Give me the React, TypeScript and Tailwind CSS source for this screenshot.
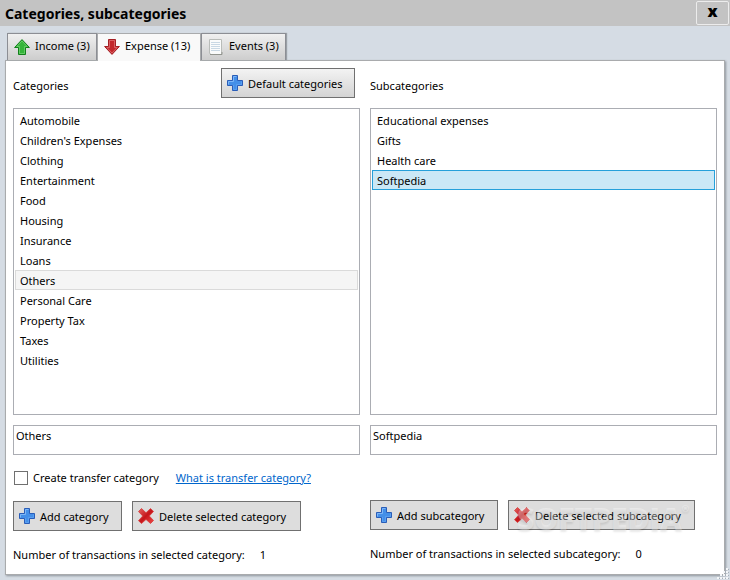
import React, { useState } from 'react';

const categories = [
  'Automobile',
  "Children's Expenses",
  'Clothing',
  'Entertainment',
  'Food',
  'Housing',
  'Insurance',
  'Loans',
  'Others',
  'Personal Care',
  'Property Tax',
  'Taxes',
  'Utilities',
];

const subcategories = ['Educational expenses', 'Gifts', 'Health care', 'Softpedia'];

export default function App() {
  const [category, setCategory] = useState('Others');
  const [subcategory, setSubcategory] = useState('Softpedia');

  return (
    <div className="flex min-h-screen flex-col bg-[#d5dce4] font-['Noto_Sans',sans-serif] text-[11px] leading-4 text-black">
      {/* Title bar */}
      <header className="flex h-[26px] items-center justify-between bg-[#c3c3c3] pl-[5px] pr-px">
        <h1 className="pt-px text-sm font-bold">Categories, subcategories</h1>
        <button
          type="button"
          aria-label="Close"
          className="flex h-6 w-[33px] items-center justify-center rounded-xs border border-[#ececec] pb-1 font-['Open_Sans',sans-serif] text-base leading-4 font-extrabold"
        >
          x
        </button>
      </header>

      <main className="relative flex flex-1 flex-col px-[5px] pt-[7px] pb-[5px]">
        {/* Tabs */}
        <div role="tablist" className="flex items-stretch pl-[2px]">
          <Tab width="w-[90px]" icon={<UpIcon />} label="Income (3)" />
          <Tab width="w-[104px]" icon={<DownIcon />} label="Expense (13)" active />
          <Tab width="w-[85px]" icon={<PageIcon />} label="Events (3)" />
        </div>

        <div
          role="tabpanel"
          className="grid flex-1 grid-cols-2 gap-[10px] border border-[#a9abad] bg-white px-[7px] pt-[7px] shadow-[1px_1px_2px_#8f969d]"
        >
          {/* Categories */}
          <section className="flex flex-col">
            <div className="mb-[10px] flex items-center justify-between pr-[5px]">
              <h2 id="categories" className="pt-[5px]">
                Categories
              </h2>
              <ActionButton icon={<PlusIcon />} label="Default categories" width="w-[134px]" light />
            </div>
            <ul role="listbox" aria-labelledby="categories" className="min-h-[307px] flex-1 border border-[#abadb3] px-px pt-px">
              {categories.map((name) => (
                <Option
                  key={name}
                  name={name}
                  selected={name === category}
                  selectedStyle="border-[#dadada] bg-[#f5f5f5]"
                  onSelect={() => setCategory(name)}
                />
              ))}
            </ul>
            <NameInput label="Category name" value={category} onChange={setCategory} />
            <div className="flex h-[46px] items-center pl-px">
              <input
                id="transfer"
                type="checkbox"
                className="size-[14px] appearance-none border border-[#707070] bg-white checked:bg-[#707070]"
              />
              <label htmlFor="transfer" className="pl-[5px]">
                Create transfer category
              </label>
              <a href="#transfer-help" className="ml-[17px] text-[#0066cc] underline">
                What is transfer category?
              </a>
            </div>
            <div className="flex gap-[10px]">
              <ActionButton icon={<PlusIcon />} label="Add category" width="w-[109px]" />
              <ActionButton icon={<CrossIcon />} label="Delete selected category" width="w-[169px]" />
            </div>
            <p className="flex h-[43px] items-center gap-[15px] pt-[4px]">
              Number of transactions in selected category: <span>1</span>
            </p>
          </section>

          {/* Subcategories */}
          <section className="flex flex-col">
            <h2 id="subcategories" className="mb-[10px] flex h-[30px] items-center pt-[5px]">
              Subcategories
            </h2>
            <ul role="listbox" aria-labelledby="subcategories" className="min-h-[307px] flex-1 border border-[#abadb3] px-px pt-px">
              {subcategories.map((name) => (
                <Option
                  key={name}
                  name={name}
                  selected={name === subcategory}
                  selectedStyle="border-[#26a0da] bg-[#cbe8f6]"
                  onSelect={() => setSubcategory(name)}
                />
              ))}
            </ul>
            <NameInput label="Subcategory name" value={subcategory} onChange={setSubcategory} />
            <div className="relative flex gap-[10px] pt-[45px] pb-px">
              <ActionButton icon={<PlusIcon />} label="Add subcategory" width="w-[128px]" />
              <ActionButton icon={<CrossIcon />} label="Delete selected subcategory" width="w-[187px]" />
              <Watermark />
            </div>
            <p className="flex h-[43px] items-center gap-[15px] pt-[2px]">
              Number of transactions in selected subcategory: <span>0</span>
            </p>
          </section>
        </div>
        <ResizeGrip />
      </main>
    </div>
  );
}

function Tab({ icon, label, width, active }: { icon: React.ReactNode; label: string; width: string; active?: boolean }) {
  const look = active
    ? 'z-10 -mb-px h-[28px] border-[#a9abad] bg-[#f9f9f9]'
    : 'h-[27px] border-[#8c8e94] bg-linear-to-b from-[#f0f0f0] to-[#cdcdcd] shadow-[1px_0_1px_#9aa0a6]';
  return (
    <button
      type="button"
      role="tab"
      aria-selected={!!active}
      className={`relative flex items-start gap-[5px] border border-b-0 pt-[5px] pl-[6px] whitespace-nowrap ${width} ${look}`}
    >
      {icon}
      <span className="-mt-px leading-4">{label}</span>
    </button>
  );
}

function ActionButton({ icon, label, width, light }: { icon: React.ReactNode; label: string; width: string; light?: boolean }) {
  return (
    <button
      type="button"
      className={`flex h-[30px] items-center gap-[5px] border border-[#707070] pl-[5px] whitespace-nowrap ${width} ${
        light ? 'bg-linear-to-b from-[#f3f3f3] to-[#d4d4d4]' : 'bg-[#dddddd]'
      }`}
    >
      {icon}
      <span className="pt-px">{label}</span>
    </button>
  );
}

type OptionProps = {
  name: string;
  selected: boolean;
  selectedStyle: string;
  onSelect: () => void;
};

function Option({ name, selected, selectedStyle, onSelect }: OptionProps) {
  return (
    <li
      role="option"
      aria-selected={selected}
      onClick={onSelect}
      className={`flex h-5 items-center border pt-px pl-1 ${selected ? selectedStyle : 'border-transparent'}`}
    >
      {name}
    </li>
  );
}

function NameInput({ label, value, onChange }: { label: string; value: string; onChange: (v: string) => void }) {
  return (
    <input
      aria-label={label}
      value={value}
      onChange={(e) => onChange(e.target.value)}
      className="mt-[10px] h-[30px] w-full border border-[#abadb3] bg-white px-[2px] pb-[10px]"
    />
  );
}

function Watermark() {
  return (
    <span
      aria-hidden="true"
      className="pointer-events-none absolute bottom-[-4px] left-[147px] flex items-start font-['Open_Sans',sans-serif] text-[30px] leading-8 font-extrabold text-white/35 [text-shadow:0_2px_2px_rgb(0_0_0/0.09)]"
    >
      SOFTPEDIA<span className="text-[9px] leading-3">®</span>
    </span>
  );
}

function ResizeGrip() {
  return (
    <svg className="absolute right-0 bottom-0" width="14" height="14" viewBox="0 0 14 14" fill="#f4f6f8">
      <path d="M10 2h2v2h-2zM7 5h2v2H7zM10 5h2v2h-2zM4 8h2v2H4zM7 8h2v2H7zM10 8h2v2h-2zM1 11h2v2H1zM4 11h2v2H4zM7 11h2v2H7zM10 11h2v2h-2z" />
      <path fill="#a7afb8" d="M12 3h1v1h-1zM9 6h1v1H9zM12 6h1v1h-1zM6 9h1v1H6zM9 9h1v1H9zM12 9h1v1h-1zM3 12h1v1H3zM6 12h1v1H6zM9 12h1v1H9zM12 12h1v1h-1z" />
    </svg>
  );
}

function PlusIcon() {
  return (
    <svg className="shrink-0" width="16" height="16" viewBox="0 0 16 16">
      <path d="M5.500.5h5v5h5v5h-5v5h-5v-5h-5v-5h5z" fill="#448fe8" stroke="#2a5db8" />
      <path d="M1.500 9.500v-3h5v-5h3" fill="none" stroke="#7db6f7" />
      <path d="M6.500 10v4.500h3v-5h5v-3" fill="none" stroke="#5a9ff0" />
    </svg>
  );
}

function CrossIcon() {
  return (
    <svg className="shrink-0" width="16" height="16" viewBox="0 0 16 16">
      <defs>
        <linearGradient id="cross" x1="0" y1="0" x2="1" y2="1">
          <stop offset="0" stopColor="#e36462" />
          <stop offset="0.5" stopColor="#c5161a" />
          <stop offset="1" stopColor="#f04a48" />
        </linearGradient>
      </defs>
      <path
        d="M3.500.5 8 4.800 12.500.6l3 2.800L11.300 8l4.200 4.500-3 3L8 11.400l-4.500 4.100-3-2.800L4.700 8 .5 3.500z"
        fill="url(#cross)"
        stroke="#d83a39"
        strokeWidth="0.8"
        strokeLinejoin="round"
      />
    </svg>
  );
}

function UpIcon() {
  return (
    <svg className="shrink-0" width="16" height="16" viewBox="0 0 16 16">
      <path d="M8 .6 15.400 8.500h-3.900v7h-7v-7H.6z" fill="#35b53a" stroke="#12801b" strokeLinejoin="round" />
      <path d="M2.800 7.500 8 2l5.200 5.500h-2.700v7h-5v-7z" fill="none" stroke="#6fd06e" strokeWidth="0.8" />
    </svg>
  );
}

function DownIcon() {
  return (
    <svg className="shrink-0" width="16" height="16" viewBox="0 0 16 16">
      <path d="M8 15.400.6 7.500h3.900v-7h7v7h3.900z" fill="#c2262b" stroke="#a31f24" strokeLinejoin="round" />
      <path d="M2.800 8.500 8 14l5.200-5.500h-2.700v-7h-5v7z" fill="none" stroke="#df6f71" strokeWidth="0.8" />
    </svg>
  );
}

function PageIcon() {
  return (
    <svg className="shrink-0" width="16" height="16" viewBox="0 0 16 16">
      <path d="M1.500.5h12v15h-10l-2-1z" fill="#fafbfb" stroke="#b9bcb9" />
      <path d="M3 3.500h9M3 5.500h9M3 7.500h9M3 9.500h9M3 11.500h9" stroke="#c9d8e4" />
      <path d="M2 15.500h12V13" fill="none" stroke="#92958f" />
    </svg>
  );
}
